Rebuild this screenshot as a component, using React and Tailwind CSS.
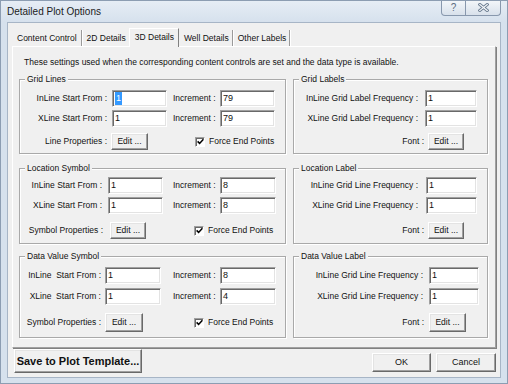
import React from "react";

function Field({ className = "", value, sel = false }) {
  return (
    <div
      className={`h-[17px] shrink-0 bg-white border border-t-[#a0a0a0] border-l-[#a0a0a0] border-r-white border-b-white shadow-[inset_1px_1px_0_#696969,inset_-1px_-1px_0_#e3e3e3] pl-[2px] pt-[1px] text-[9px] leading-[13px] ${className}`}
    >
      {sel ? <span className="inline-block bg-[#3399ff] text-white px-[1px]">{value}</span> : value}
    </div>
  );
}

function Btn({ className = "", children }) {
  return (
    <div
      className={`shrink-0 flex items-center justify-center bg-[#f0f0f0] border border-t-white border-l-white border-r-[#696969] border-b-[#696969] shadow-[inset_-1px_-1px_0_#a0a0a0,inset_1px_1px_0_#e3e3e3] ${className}`}
    >
      {children}
    </div>
  );
}

function Check() {
  return (
    <div className="w-[10px] h-[10px] shrink-0 bg-white border border-t-[#a0a0a0] border-l-[#a0a0a0] border-r-white border-b-white shadow-[inset_1px_1px_0_#696969] flex items-center justify-center">
      <svg width="7" height="7" viewBox="0 0 7 7">
        <path d="M0.6 3.4 L2.6 5.4 L6.4 1.2" fill="none" stroke="#000" strokeWidth="1.5" />
      </svg>
    </div>
  );
}

function Group({ title, className = "", children }) {
  return (
    <div
      className={`flex flex-col border border-[#a9a9a9] shadow-[inset_1px_1px_0_#fff,1px_1px_0_#fff] ${className}`}
    >
      <div className="-mt-[6px] ml-[5px] px-[2px] w-fit h-[11px] bg-[#f0f0f0] leading-[11px]">{title}</div>
      {children}
    </div>
  );
}

function ForceEnd({ className = "" }) {
  return (
    <div className={`flex items-center ${className}`}>
      <Check />
      <span className="ml-[4px]">Force End Points</span>
    </div>
  );
}

export default function App() {
  return (
    <div className="w-[508px] h-[384px] overflow-hidden bg-[#d6e1ed] border border-[#8c9db2] flex flex-col font-['Liberation_Sans',Arial,sans-serif] text-[#111] text-[8.5px] leading-[11px]">
      {/* title bar */}
      <div className="h-[21px] shrink-0 flex items-start bg-linear-to-b from-[#e6edf5] to-[#d6e1ed]">
        <div className="pl-[6px] pt-[4px] text-[10px] leading-[13px] text-[#1b1b1b]">Detailed Plot Options</div>
        <div className="ml-auto mr-[6px] -mt-[1px] flex h-[16px] border border-t-0 border-[#8898ad] rounded-b-[4px] overflow-hidden bg-linear-to-b from-[#f4f7fa] to-[#d8e1eb]">
          <div className="w-[24px] flex items-center justify-center border-r border-[#8898ad] text-[10px] leading-none text-[#5b6c80]">?</div>
          <div className="w-[34px] flex items-center justify-center">
            <svg width="11" height="9" viewBox="0 0 11 9">
              <path d="M1.8 1.5 L9.2 7.5 M9.2 1.5 L1.8 7.5" stroke="#6f8094" strokeWidth="3" strokeLinecap="square" />
              <path d="M1.8 1.5 L9.2 7.5 M9.2 1.5 L1.8 7.5" stroke="#f7f9fb" strokeWidth="1.2" strokeLinecap="square" />
            </svg>
          </div>
        </div>
      </div>

      {/* client area */}
      <div className="mx-[6px] h-[356px] shrink-0 bg-[#f0f0f0] border border-[#a7b5c6] flex flex-col">
        {/* tabs */}
        <div className="relative z-10 flex items-end h-[18px] mt-[5px] ml-[4px]">
          <div className="h-[16px] flex items-center pl-[5px] pr-[4px] border-r border-[#9a9a9a] shadow-[1px_0_0_#fff]">Content Control</div>
          <div className="h-[16px] flex items-center pl-[5px] pr-[3px]">2D Details</div>
          <div className="h-[19px] -mb-[1px] flex items-start pt-[3px] pl-[5px] pr-[4px] bg-[#f0f0f0] border-t border-l border-t-white border-l-white border-r border-r-[#808080]">3D Details</div>
          <div className="h-[16px] flex items-center pl-[5px] pr-[3px] border-r border-[#9a9a9a] shadow-[1px_0_0_#fff]">Well Details</div>
          <div className="h-[16px] flex items-center pl-[5px] pr-[3px] border-r border-[#9a9a9a] shadow-[1px_0_0_#fff]">Other Labels</div>
        </div>

        {/* panel */}
        <div className="mx-[4px] h-[302px] shrink-0 flex flex-col pl-[6px] border border-t-white border-l-white border-r-[#a0a0a0] border-b-[#a0a0a0] shadow-[1px_1px_0_#808080]">
          <div className="h-[32px] shrink-0 pl-[5px] pt-[10px]">
            These settings used when the corresponding content controls are set and the data type is available.
          </div>

          {/* row 1 */}
          <div className="flex gap-[7px] h-[75px] shrink-0">
            <Group title="Grid Lines" className="w-[267px]">
              <div className="flex items-center h-[17px] mt-[5px]">
                <div className="w-[87px] text-right">InLine Start From :</div>
                <Field className="ml-[5px] w-[55px]" value="1" sel />
                <div className="ml-[6px] w-[47px]">Increment :</div>
                <Field className="w-[55px]" value="79" />
              </div>
              <div className="flex items-center h-[17px] mt-[3px]">
                <div className="w-[87px] text-right">XLine Start From :</div>
                <Field className="ml-[5px] w-[55px]" value="1" />
                <div className="ml-[6px] w-[47px]">Increment :</div>
                <Field className="w-[55px]" value="79" />
              </div>
              <div className="flex items-center h-[17px] mt-[6px]">
                <div className="w-[87px] text-right">Line Properties :</div>
                <Btn className="ml-[4px] w-[37px] h-[17px]">Edit ...</Btn>
                <ForceEnd className="ml-[47px]" />
              </div>
            </Group>
            <Group title="Grid Labels" className="w-[195px]">
              <div className="flex items-center h-[17px] mt-[5px]">
                <div className="w-[124px] text-right">InLine Grid Label Frequency :</div>
                <Field className="ml-[7px] w-[52px]" value="1" />
              </div>
              <div className="flex items-center h-[17px] mt-[3px]">
                <div className="w-[124px] text-right">XLine Grid Label Frequency :</div>
                <Field className="ml-[7px] w-[52px]" value="1" />
              </div>
              <div className="flex items-center h-[17px] mt-[6px]">
                <div className="w-[130px] text-right">Font :</div>
                <Btn className="ml-[4px] w-[36px] h-[17px]">Edit ...</Btn>
              </div>
            </Group>
          </div>

          {/* row 2 */}
          <div className="flex gap-[7px] h-[76px] shrink-0 mt-[14px]">
            <Group title="Location Symbol" className="w-[267px]">
              <div className="flex items-center h-[17px] mt-[3px]">
                <div className="w-[82px] text-right">InLine Start From :</div>
                <Field className="ml-[6px] w-[55px]" value="1" />
                <div className="ml-[10px] w-[47px]">Increment :</div>
                <Field className="w-[56px]" value="8" />
              </div>
              <div className="flex items-center h-[17px] mt-[3px]">
                <div className="w-[82px] text-right">XLine Start From :</div>
                <Field className="ml-[6px] w-[55px]" value="1" />
                <div className="ml-[10px] w-[47px]">Increment :</div>
                <Field className="w-[56px]" value="8" />
              </div>
              <div className="flex items-center h-[17px] mt-[8px]">
                <div className="w-[83px] text-right">Symbol Properties :</div>
                <Btn className="ml-[7px] w-[36px] h-[17px]">Edit ...</Btn>
                <ForceEnd className="ml-[48px]" />
              </div>
            </Group>
            <Group title="Location Label" className="w-[195px]">
              <div className="flex items-center h-[17px] mt-[3px]">
                <div className="w-[124px] text-right">InLine Grid Line Frequency :</div>
                <Field className="ml-[8px] w-[51px]" value="1" />
              </div>
              <div className="flex items-center h-[17px] mt-[3px]">
                <div className="w-[124px] text-right">XLine Grid Line Frequency :</div>
                <Field className="ml-[8px] w-[51px]" value="1" />
              </div>
              <div className="flex items-center h-[17px] mt-[8px]">
                <div className="w-[130px] text-right">Font :</div>
                <Btn className="ml-[4px] w-[36px] h-[17px]">Edit ...</Btn>
              </div>
            </Group>
          </div>

          {/* row 3 */}
          <div className="flex gap-[7px] h-[82px] shrink-0 mt-[12px]">
            <Group title="Data Value Symbol" className="w-[267px]">
              <div className="flex items-center h-[17px] mt-[5px]">
                <div className="w-[81px] text-right whitespace-pre">InLine  Start From :</div>
                <Field className="ml-[4px] w-[56px]" value="1" />
                <div className="ml-[12px] w-[47px]">Increment :</div>
                <Field className="w-[56px]" value="8" />
              </div>
              <div className="flex items-center h-[17px] mt-[4px]">
                <div className="w-[81px] text-right whitespace-pre">XLine  Start From :</div>
                <Field className="ml-[4px] w-[56px]" value="1" />
                <div className="ml-[12px] w-[47px]">Increment :</div>
                <Field className="w-[56px]" value="4" />
              </div>
              <div className="flex items-center h-[19px] mt-[8px]">
                <div className="w-[81px] text-right">Symbol Properties :</div>
                <Btn className="ml-[4px] w-[38px] h-[19px]">Edit ...</Btn>
                <ForceEnd className="ml-[51px]" />
              </div>
            </Group>
            <Group title="Data Value Label" className="w-[195px]">
              <div className="flex items-center h-[17px] mt-[5px]">
                <div className="w-[129px] text-right">InLine Grid Line Frequency :</div>
                <Field className="ml-[6px] w-[50px]" value="1" />
              </div>
              <div className="flex items-center h-[17px] mt-[4px]">
                <div className="w-[129px] text-right">XLine Grid Line Frequency :</div>
                <Field className="ml-[6px] w-[50px]" value="1" />
              </div>
              <div className="flex items-center h-[19px] mt-[8px]">
                <div className="w-[130px] text-right">Font :</div>
                <Btn className="ml-[5px] w-[37px] h-[19px]">Edit ...</Btn>
              </div>
            </Group>
          </div>
        </div>

        {/* bottom buttons */}
        <div className="flex items-start mt-[1px] pl-[6px] pr-[4px]">
          <Btn className="w-[128px] h-[24px] font-bold text-[11px]">Save to Plot Template...</Btn>
          <Btn className="ml-auto mt-[4px] w-[59px] h-[19px] text-[9px]">OK</Btn>
          <Btn className="ml-[5px] mt-[4px] w-[60px] h-[19px] text-[9px]">Cancel</Btn>
        </div>
      </div>
    </div>
  );
}
